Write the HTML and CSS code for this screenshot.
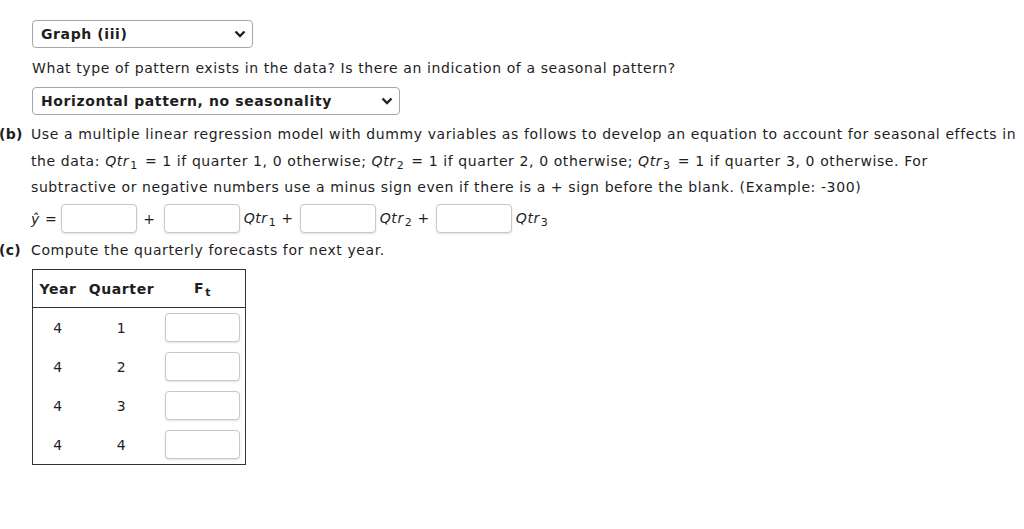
FILE: index.html
```html
<!DOCTYPE html>
<html>
<head>
<meta charset="utf-8">
<link rel="stylesheet" href="styles.css">
</head>
<body>
<div class="page">
  <div class="indent">
    <div class="select sel-graph">
      <span class="sel-text">Graph (iii)</span>
      <svg class="chev" width="12" height="8" viewBox="0 0 12 8"><path d="M1.5 1.5 L6 6 L10.5 1.5" fill="none" stroke="#222" stroke-width="2.4"/></svg>
    </div>
    <p class="line q-line">What type of pattern exists in the data? Is there an indication of a seasonal pattern?</p>
    <div class="select sel-pattern">
      <span class="sel-text">Horizontal pattern, no seasonality</span>
      <svg class="chev" width="12" height="8" viewBox="0 0 12 8"><path d="M1.5 1.5 L6 6 L10.5 1.5" fill="none" stroke="#222" stroke-width="2.4"/></svg>
    </div>
  </div>

  <div class="part part-b">
    <span class="part-label">(b)</span>
    <div class="part-body">
      <p class="para">Use a multiple linear regression model with dummy variables as follows to develop an equation to account for seasonal effects in the data: <span class="var"><i>Qtr</i><sub>1</sub></span> = 1 if quarter 1, 0 otherwise; <span class="var"><i>Qtr</i><sub>2</sub></span> = 1 if quarter 2, 0 otherwise; <span class="var"><i>Qtr</i><sub>3</sub></span> = 1 if quarter 3, 0 otherwise. For<br>subtractive or negative numbers use a minus sign even if there is a + sign before the blank. (Example: -300)</p>
      <div class="equation">
        <span class="yhat"><i>ŷ</i> =</span>
        <span class="box"></span>
        <span class="op">+</span>
        <span class="box"></span>
        <span class="term"><span class="var"><i>Qtr</i><sub>1</sub></span> +</span>
        <span class="box"></span>
        <span class="term"><span class="var"><i>Qtr</i><sub>2</sub></span> +</span>
        <span class="box"></span>
        <span class="term"><span class="var"><i>Qtr</i><sub>3</sub></span></span>
      </div>
    </div>
  </div>

  <div class="part part-c">
    <span class="part-label">(c)</span>
    <div class="part-body">
      <p class="para">Compute the quarterly forecasts for next year.</p>
    </div>
  </div>

  <div class="indent">
    <table class="fc">
      <thead>
        <tr><th class="c1">Year</th><th class="c2">Quarter</th><th class="c3">F<sub>t</sub></th></tr>
      </thead>
      <tbody>
        <tr><td>4</td><td>1</td><td><span class="box tbox"></span></td></tr>
        <tr><td>4</td><td>2</td><td><span class="box tbox"></span></td></tr>
        <tr><td>4</td><td>3</td><td><span class="box tbox"></span></td></tr>
        <tr><td>4</td><td>4</td><td><span class="box tbox"></span></td></tr>
      </tbody>
    </table>
  </div>
</div>
</body>
</html>
```
FILE: styles.css
```css
html, body {
  margin: 0;
  padding: 0;
  background: #ffffff;
}
body {
  font-family: "DejaVu Sans", Verdana, sans-serif;
  font-size: 14px;
  letter-spacing: 0.6px;
  color: #1e1e1e;
}
.page {
  padding-top: 20px;
}
.indent {
  padding-left: 32px;
}
.select {
  box-sizing: border-box;
  height: 28px;
  border: 1px solid #a6a6a6;
  border-radius: 4px;
  display: flex;
  align-items: center;
  justify-content: space-between;
  padding: 0 6px 0 8px;
  background: #fff;
}
.sel-graph { width: 221px; }
.sel-pattern { width: 368px; }
.sel-text {
  font-weight: bold;
}
.chev { display: block; }
.line {
  margin: 0;
  line-height: 20px;
  padding: 10px 0 9px;
}
.part {
  display: flex;
  margin-top: 6px;
}
.part-label {
  width: 32px;
  flex: none;
  font-weight: bold;
  line-height: 26.5px;
  margin-left: -1px;
  letter-spacing: 0.3px;
}
.part-body {
  flex: 1;
  padding-right: 6px;
}
.para {
  margin: 0;
  line-height: 26.5px;
}
.var {
  display: inline-block;
  line-height: 18px;
  padding-right: 2px;
}
sub {
  font-size: 11px;
  vertical-align: -3px;
  line-height: 1;
  padding-left: 1px;
}
i { font-style: italic; }
.equation {
  display: flex;
  align-items: center;
  height: 36px;
}
.equation .var { padding-right: 0; }
.box {
  display: inline-block;
  box-sizing: border-box;
  width: 76px;
  height: 29px;
  border: 1px solid #c8c8c8;
  border-radius: 4px;
  box-shadow: 0 1px 2px rgba(0,0,0,0.12);
  background: #fff;
}
.yhat { margin-right: 4px; }
.op { margin: 0 8px 0 6px; }
.term { margin: 0 6px 0 4px; }
.part-c { margin-top: 0; }
.fc {
  border-collapse: collapse;
  border: 1px solid #333;
  margin-top: 6px;
}
.fc th {
  font-weight: bold;
  height: 37px;
  padding: 0;
  border-bottom: 1px solid #333;
  text-align: center;
}
.fc .c1 { width: 50px; }
.fc .c2 { width: 77px; }
.fc .c3 { width: 85px; }
.fc td {
  height: 39px;
  padding: 0;
  text-align: center;
  vertical-align: middle;
}
.fc th sub { font-size: 11px; vertical-align: -3px; }
.tbox {
  width: 75px;
  display: block;
  margin: 0 auto;
}
```
